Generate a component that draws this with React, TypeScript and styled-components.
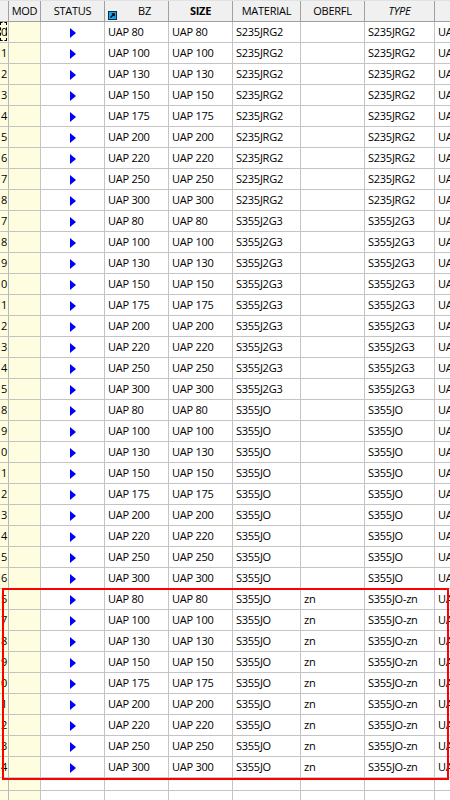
import React from "react";
import styled, { createGlobalStyle, css } from "styled-components";

const Global = createGlobalStyle`
  html, body { margin: 0; padding: 0; background: #fff; }
  body { font-family: "Open Sans", "Noto Sans", sans-serif; }
`;

const COLS = "9px 32px 64px 64px 64px 68px 64px 70px 1fr";

const Frame = styled.div`
  position: relative;
  width: 450px;
  height: 800px;
  overflow: hidden;
  background: #fff;
  font-size: 11px;
  letter-spacing: -0.25px;
  color: #000;
`;

const HeaderRow = styled.div`
  display: grid;
  grid-template-columns: ${COLS};
  height: 22px;
  box-sizing: border-box;
  background: #f0f0f0;
  border-top: 1px solid #e2e2e2;
  border-bottom: 1px solid #a0a0a0;
`;

const HeadCell = styled.div<{ $bold?: boolean; $italic?: boolean }>`
  display: flex;
  align-items: center;
  justify-content: center;
  position: relative;
  border-right: 1px solid #a0a0a0;
  white-space: nowrap;
  overflow: hidden;
  padding-bottom: 2px;
  box-sizing: border-box;
  font-weight: ${(p) => (p.$bold ? 700 : 400)};
  font-style: ${(p) => (p.$italic ? "italic" : "normal")};
  &:last-child { border-right: none; }
`;

const HeadIcon = styled.svg`
  position: absolute;
  left: 3px;
  top: 10px;
  width: 9px;
  height: 9px;
`;

const HeadLabel = styled.span<{ $shift?: number }>`
  margin-left: ${(p) => p.$shift ?? 0}px;
`;

const Row = styled.div<{ $h?: number }>`
  display: grid;
  grid-template-columns: ${COLS};
  height: ${(p) => p.$h ?? 21}px;
  box-sizing: border-box;
  border-bottom: 1px solid #c4c4c4;
`;

const Cell = styled.div<{ $kind?: "num" | "mod" | "status" | "text" }>`
  display: flex;
  align-items: center;
  box-sizing: border-box;
  border-right: 1px solid #c4c4c4;
  white-space: nowrap;
  overflow: hidden;
  padding-left: 3px;
  padding-bottom: 1px;
  ${(p) =>
    p.$kind === "num" &&
    css`
      background: #fffde0;
      justify-content: flex-end;
      padding-left: 0;
      padding-right: 0;
      border-right-color: #b8b8b8;
    `}
  ${(p) =>
    p.$kind === "mod" &&
    css`
      background: #fffde0;
    `}
  ${(p) =>
    p.$kind === "status" &&
    css`
      justify-content: center;
      padding-left: 1px;
    `}
  &:last-child { border-right: none; }
`;

const Focus = styled.span`
  position: absolute;
  inset: 0 1px 0 0;
  border: 1px dashed #000;
  pointer-events: none;
`;

const NumWrap = styled.div`
  position: relative;
  width: 100%;
  height: 100%;
  display: flex;
  align-items: center;
  justify-content: flex-end;
  padding-right: 1px;
  box-sizing: border-box;
`;

const Triangle = styled.span`
  width: 0;
  height: 0;
  border-top: 5px solid transparent;
  border-bottom: 5px solid transparent;
  border-left: 6px solid #0000ff;
  margin-top: 2px;
`;

const Selection = styled.div`
  position: absolute;
  left: 2px;
  top: 588px;
  width: 447px;
  height: 192px;
  box-sizing: border-box;
  border: 2px solid #ff0000;
  pointer-events: none;
`;

type R = { n: string; bz: string; mat: string; ob: string; type: string };

const sizes = ["80", "100", "130", "150", "175", "200", "220", "250", "300"];
const groups: { nums: string[]; mat: string; ob: string; type: string }[] = [
  { nums: ["0", "1", "2", "3", "4", "5", "6", "7", "8"], mat: "S235JRG2", ob: "", type: "S235JRG2" },
  { nums: ["7", "8", "9", "0", "1", "2", "3", "4", "5"], mat: "S355J2G3", ob: "", type: "S355J2G3" },
  { nums: ["8", "9", "0", "1", "2", "3", "4", "5", "6"], mat: "S355JO", ob: "", type: "S355JO" },
  { nums: ["5", "7", "8", "9", "0", "1", "2", "3", "4"], mat: "S355JO", ob: "zn", type: "S355JO-zn" },
];

const rows: R[] = groups.flatMap((g) =>
  sizes.map((s, i) => ({ n: g.nums[i], bz: `UAP ${s}`, mat: g.mat, ob: g.ob, type: g.type }))
);

export default function App() {
  return (
    <>
      <Global />
      <Frame>
        <HeaderRow>
          <HeadCell />
          <HeadCell>MOD</HeadCell>
          <HeadCell>STATUS</HeadCell>
          <HeadCell>
            <HeadIcon viewBox="0 0 9 9">
              <rect x="0.5" y="0.5" width="8" height="8" fill="#1ea7e8" stroke="#003060" />
              <path d="M2.5 6.5 L6 3 M3.8 2.8 H6.2 V5.2" stroke="#000" strokeWidth="1.3" fill="none" />
            </HeadIcon>
            <HeadLabel $shift={16}>BZ</HeadLabel>
          </HeadCell>
          <HeadCell $bold>SIZE</HeadCell>
          <HeadCell>MATERIAL</HeadCell>
          <HeadCell>OBERFL</HeadCell>
          <HeadCell $italic>TYPE</HeadCell>
          <HeadCell />
        </HeaderRow>
        {rows.map((r, i) => (
          <Row key={i}>
            <Cell $kind="num">
              <NumWrap>
                {r.n}
                {i === 0 && <Focus />}
              </NumWrap>
            </Cell>
            <Cell $kind="mod" />
            <Cell $kind="status">
              <Triangle />
            </Cell>
            <Cell>{r.bz}</Cell>
            <Cell>{r.bz}</Cell>
            <Cell>{r.mat}</Cell>
            <Cell>{r.ob}</Cell>
            <Cell>{r.type}</Cell>
            <Cell>{r.bz}</Cell>
          </Row>
        ))}
        <Row $h={13}>
          <Cell $kind="num" />
          <Cell $kind="mod" />
          <Cell />
          <Cell />
          <Cell />
          <Cell />
          <Cell />
          <Cell />
          <Cell />
        </Row>
        <Row $h={21}>
          <Cell $kind="num" />
          <Cell $kind="mod" />
          <Cell />
          <Cell />
          <Cell />
          <Cell />
          <Cell />
          <Cell />
          <Cell />
        </Row>
        <Selection />
      </Frame>
    </>
  );
}
